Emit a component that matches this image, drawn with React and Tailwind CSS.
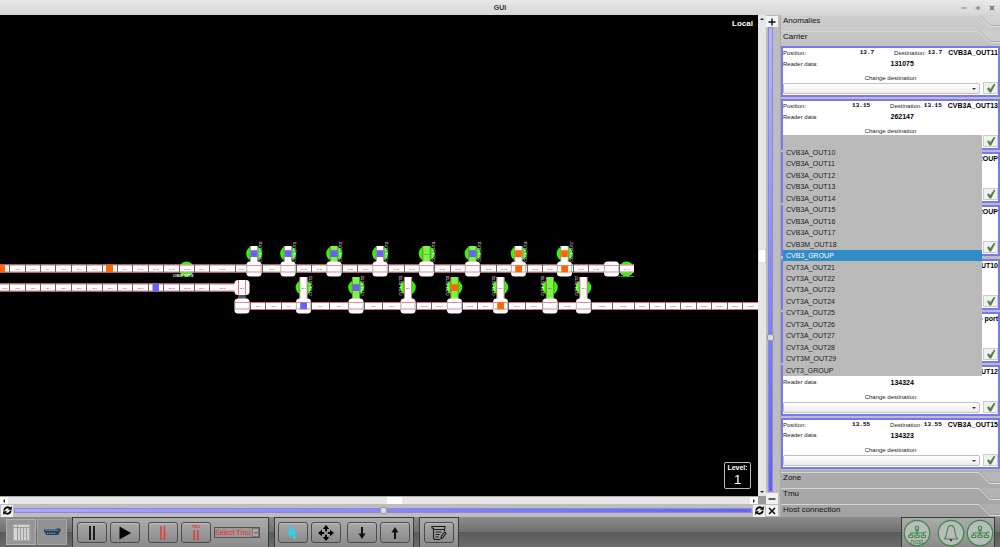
import React, { useState } from 'react';

const TOP_DIVIDERS = [9, 25, 40, 55, 71, 86, 102, 117, 132, 148, 163, 179, 194, 209, 235, 247, 262, 281, 296, 311, 327, 342, 357, 373, 388, 404, 419, 434, 450, 465, 480, 496, 511, 527, 542, 557, 573, 588, 604, 619];
const MIDDLE_DIVIDERS = [9, 25, 40, 55, 71, 86, 102, 117, 132, 148, 163, 179, 194, 209];
const BOTTOM_DIVIDERS = [250, 265, 281, 296, 311, 329, 348, 364, 382, 401, 416, 431, 447, 462, 477, 493, 508, 525, 542, 558, 576, 591, 612, 634, 649, 665, 680, 696, 711, 727, 742];

const BLUE = '#6363fb';
const ORANGE = '#ff6500';
const GREEN = '#33f50a';
const LIME = '#74f947';

const TOP_UNITS = [
  { x: 254, stem: '#fff', load: BLUE, label: 'CVB3A_OUT10' },
  { x: 288, stem: '#fff', load: BLUE, label: 'CVB3A_OUT11' },
  { x: 334, stem: LIME, load: BLUE, label: 'CVB3A_OUT12' },
  { x: 380, stem: '#fff', load: BLUE, label: 'CVB3A_OUT13' },
  { x: 426.5, stem: LIME, label: 'CVB3A_OUT14' },
  { x: 472.5, stem: LIME, load: BLUE, label: 'CVB3A_OUT15' },
  { x: 518.5, stem: '#fff', load: ORANGE, base: ORANGE, label: 'CVB3A_OUT16' },
  { x: 564.5, stem: '#fff', load: ORANGE, base: ORANGE, label: 'CVB3A_OUT17' },
];

const BOTTOM_UNITS = [
  { x: 303.5, stem: '#fff', base: BLUE, side: 8, label: 'CVT3A_OUT21' },
  { x: 356, stem: LIME, load: BLUE, side: 8, label: 'CVT3A_OUT22' },
  { x: 408, stem: '#fff', side: -6, label: 'CVT3A_OUT23' },
  { x: 454.5, stem: LIME, load: ORANGE, side: -6, label: 'CVT3A_OUT24' },
  { x: 500.5, stem: '#fff', base: ORANGE, side: -6, label: 'CVT3A_OUT25' },
  { x: 550, stem: LIME, side: -6, label: 'CVT3A_OUT26' },
  { x: 583.5, stem: '#fff', side: -6, label: 'CVT3A_OUT27' },
];

const DESTINATIONS = [
  'CVB3A_OUT10', 'CVB3A_OUT11', 'CVB3A_OUT12', 'CVB3A_OUT13', 'CVB3A_OUT14', 'CVB3A_OUT15', 'CVB3A_OUT16',
  'CVB3A_OUT17', 'CVB3M_OUT18', 'CVB3_GROUP', 'CVT3A_OUT21', 'CVT3A_OUT22', 'CVT3A_OUT23', 'CVT3A_OUT24',
  'CVT3A_OUT25', 'CVT3A_OUT26', 'CVT3A_OUT27', 'CVT3A_OUT28', 'CVT3M_OUT29', 'CVT3_GROUP',
];

// compact cards lie behind the open list and only carry their name
const CARRIERS = [
  { position: '13.7', name: 'CVB3A_OUT11', reader: '131075' },
  { position: '13.15', name: 'CVB3A_OUT13', reader: '262147', open: true },
  { name: 'CVB3_GROUP', compact: true },
  { name: 'CVB3_GROUP', compact: true },
  { name: 'CVB3A_OUT10', compact: true },
  { name: 'No port', compact: true },
  { name: 'CVB3A_OUT12', reader: '134324' },
  { position: '13.55', name: 'CVB3A_OUT15', reader: '134323' },
];

function Track({ from, to, y, dividers, prefix }) {
  const stops = [from, ...dividers, to];
  return (
    <g>
      <rect x={from} y={y} width={to - from} height="8" fill="#fff" />
      <path d={`M${from} ${y + 0.5}H${to}M${from} ${y + 7.5}H${to}`} stroke="#cf4a58" strokeWidth="0.8" />
      {dividers.map((x) => (
        <path key={x} d={`M${x + 0.5} ${y}v8`} stroke="#555" strokeWidth="0.9" />
      ))}
      {stops.slice(0, -1).map((x, i) => (
        <text key={x} x={(x + stops[i + 1]) / 2 + 0.5} y={y + 5} fontSize="2.4" textAnchor="middle" fill="#444">
          {prefix}.{i + 1}
        </text>
      ))}
    </g>
  );
}

function Block({ x, y }) {
  return (
    <g>
      <rect x={x - 7.5} y={y} width="15" height="15" rx="3.5" fill="#fff" />
      <path d={`M${x - 7} ${y + 4}h14M${x - 7} ${y + 10.5}h14`} stroke="#d9566a" strokeWidth="0.7" />
      <path d={`M${x - 7.2} ${y + 3}v8M${x + 7.2} ${y + 3}v8`} stroke="#777" strokeWidth="0.6" />
    </g>
  );
}

function Unit({ x, stem, load, base, label, side = 8, top, height, center, block }) {
  return (
    <g>
      <circle cx={x} cy={center} r="7.8" fill={GREEN} />
      <text transform={`translate(${x + side} ${center + 8}) rotate(-90)`} fontSize="2.8" fill="#fff">{label}</text>
      <rect x={x - 4} y={top} width="8" height={height} fill={stem} />
      <path d={`M${x - 3.7} ${top}v${height}M${x + 3.7} ${top}v${height}`} stroke="#a8483c" strokeWidth="0.8" />
      {load ? (
        <rect x={x - 3.3} y={center - 3.3} width="6.6" height="6.8" fill={load} />
      ) : (
        <text x={x} y={center + 1} fontSize="2.4" textAnchor="middle" fill="#333">13.7</text>
      )}
      <Block x={x} y={block} />
      {base && <rect x={x - 3.3} y={block + 4} width="6.8" height="6.8" fill={base} />}
    </g>
  );
}

function PlantMap() {
  return (
    <svg viewBox="0 15 758 481" preserveAspectRatio="xMinYMin meet" className="block h-full w-full">
      <circle cx="186.5" cy="269" r="7.5" fill={GREEN} />
      <circle cx="626.5" cy="269" r="7.5" fill={GREEN} />
      <Track from={0} to={634} y={264.5} dividers={TOP_DIVIDERS} prefix="11" />
      <rect x="0" y="265" width="5" height="7" fill={ORANGE} />
      <rect x="106" y="265" width="7" height="7" fill={ORANGE} />
      <Track from={0} to={235} y={283.5} dividers={MIDDLE_DIVIDERS} prefix="12" />
      <rect x="152.5" y="284" width="6.5" height="7" fill={BLUE} />
      <Track from={235} to={758} y={302} dividers={BOTTOM_DIVIDERS} prefix="13" />
      <text x="173" y="276.5" fontSize="2.8" fontWeight="bold" fill="#fff">CVB3M_OUT18</text>
      <text x="618" y="277" fontSize="2.2" fill="#fff">CVT3M_OUT28</text>

      <rect x="238" y="294" width="8" height="6" fill="#555" />
      <rect x="234.5" y="280" width="15" height="15" rx="3.5" fill="#fff" />
      <path d="M238.5 280v15M245.5 280v15" stroke="#d9566a" strokeWidth="0.8" />
      <text x="242" y="288.5" fontSize="2.4" textAnchor="middle" fill="#333">12.1</text>
      <Block x={242} y={298.5} />
      <Block x={611.5} y={261.5} />

      {TOP_UNITS.map((unit) => (
        <Unit key={unit.label} {...unit} top={246} height={16} center={253.5} block={261.5} />
      ))}
      {BOTTOM_UNITS.map((unit) => (
        <Unit key={unit.label} {...unit} top={277} height={22} center={287.5} block={298.5} />
      ))}
    </svg>
  );
}

function TabHeader({ title }) {
  return (
    <button className="flex h-4 w-full shrink-0 items-start text-left">
      <span className="flex h-full flex-1 items-start border-t border-[#d4d4d4] pl-0.5 text-[8px] leading-[9px] text-[#111]">{title}</span>
      <svg viewBox="0 0 21 16" className="h-4 w-[21px]" fill="none">
        <path d="M0 .5 11 11.5H21V0H0z" fill="#fff" fillOpacity="0.12" />
        <path d="M0 .5 11 11.5H21" stroke="#dedede" />
        <path d="M0 -.8 11.4 10.5H21" stroke="#888" strokeWidth="0.5" />
      </svg>
    </button>
  );
}

function CarrierCard({ carrier, index, selected, onSelect }) {
  return (
    <div className="relative flex h-[51px] shrink-0 flex-col border-2 border-[#7878f4] bg-white text-[6px] text-[#222]">
      <div className="flex h-[10px] items-center leading-[10px]">
        {carrier.position && (
          <>
            <span className="flex-1">Position:</span>
            <span className="font-['Liberation_Mono',monospace] text-[6px] font-bold text-black">{carrier.position}</span>
            <span className="ml-5">Destination:</span>
            <span className="ml-0.5 font-['Liberation_Mono',monospace] text-[6px] font-bold text-black">{carrier.position}</span>
          </>
        )}
        <span className="ml-auto pl-1.5 text-[7px] font-bold text-black">{carrier.name}</span>
      </div>
      <div className="grid h-3 grid-cols-2 items-center">
        {carrier.reader && (
          <>
            <span>Reader data:</span>
            <span className="text-[7px] font-bold text-black">{carrier.reader}</span>
          </>
        )}
      </div>
      <label htmlFor={`destination-${index}`} className="flex h-[13px] items-end justify-center leading-[10px]">
        {!carrier.compact && 'Change destination'}
      </label>
      <div className="flex h-[11px] gap-[3px]">
        <div className="relative flex-1">
          <select
            id={`destination-${index}`}
            aria-label="Change destination"
            defaultValue=""
            className="block h-full w-full appearance-none rounded-[2px] border border-[#c0c0c0] bg-linear-to-b from-white to-[#ececec] text-[7px]"
          >
            <option value=""></option>
            {DESTINATIONS.map((name) => <option key={name}>{name}</option>)}
          </select>
          <svg viewBox="0 0 4 2" className="pointer-events-none absolute top-[5px] right-1 h-0.5 w-1"><path d="M0 0h4L2 2z" fill="#333" /></svg>
        </div>
        <button aria-label="Apply destination" className="-mt-px flex h-3 w-[15px] items-center justify-center border border-[#ccc] bg-[#f1f1f1]">
          <svg viewBox="0 0 12 12" className="h-[10px] w-[10px]"><path d="M1.200 6.500 3.500 5 5 7.500 9.500.8 11.200 1.800 6.200 11.500H4.200z" fill="#587f4b" /></svg>
        </button>
      </div>
      {carrier.open && (
        <ul role="listbox" aria-label="Destinations" className="absolute top-[34px] right-4 left-0 z-10 flex h-[241px] flex-col bg-[#bababa] text-[7px] text-[#222]">
          <li className="flex-1"></li>
          {DESTINATIONS.map((name) => (
            <li
              key={name}
              role="option"
              aria-selected={name === selected}
              onClick={() => onSelect(name)}
              className={`flex flex-1 items-center pl-[3px] leading-[11px] ${name === selected ? 'bg-[#308cc6] text-white' : ''}`}
            >
              {name}
            </li>
          ))}
        </ul>
      )}
    </div>
  );
}

function ToolButton({ label, children }) {
  return (
    <button aria-label={label} className="flex h-[21px] w-[30px] items-center justify-center rounded-[3px] border border-[#4c4c4c] bg-linear-to-b from-[#a9a9a9] to-[#8b8b8b] shadow-[inset_0_1px_0_#bdbdbd]">
      {children}
    </button>
  );
}

function ToolGroup({ children, className = '' }) {
  return (
    <div className={`flex h-full items-center border border-b-0 border-[#3b3b3b] bg-linear-to-b from-[#ababab] to-[#8c8c8c] ${className}`}>
      {children}
    </div>
  );
}

function RefreshIcon() {
  return (
    <svg viewBox="0 0 12 12" className="h-[11px] w-[11px]" fill="none" stroke="#000" strokeWidth="2">
      <path d="M2.5 6a3.6 3.6 0 0 1 6-2.6M9.5 6a3.6 3.6 0 0 1-6 2.6" />
      <path d="M10.7 1v4.2H6.5zM1.3 11V6.8h4.2z" fill="#000" stroke="none" />
    </svg>
  );
}

function HostTree({ label }) {
  return (
    <svg viewBox="0 0 28 28" className="h-7 w-7" fill="none" stroke="#3a8a48" strokeWidth="1.1">
      <circle cx="14" cy="14" r="12.7" fill="#b9bdb9" strokeWidth="1.2" />
      <circle cx="14" cy="9" r="1.7" />
      <path d="M12 11.700h4M14 11v5M7.5 16v-2h13v2M20.5 13.2h3" />
      <rect x="5.5" y="16" width="4.5" height="2.5" rx="1" />
      <rect x="11.8" y="16" width="4.5" height="2.5" rx="1" />
      <rect x="18.2" y="16" width="4.5" height="2.5" rx="1" />
      {label && <text x="14" y="24.5" fontSize="6.5" textAnchor="middle" fill="#2f7d3c" stroke="none">{label}</text>}
    </svg>
  );
}

export default function App() {
  const [selected, setSelected] = useState('CVB3_GROUP');

  return (
    <div className="flex h-screen min-h-[540px] flex-col overflow-hidden bg-[#bdbdbd] font-['Liberation_Sans',Arial,sans-serif] text-[#222]">
      {/* Title bar */}
      <header className="grid h-[15px] shrink-0 grid-cols-3 items-center bg-linear-to-b from-[#e9e9e9] to-[#d6d6d6]">
        <h1 className="col-start-2 text-center text-[7px] font-bold leading-[15px] text-[#333]">GUI</h1>
        <div className="flex justify-end gap-2 pr-[5px]">
          <button aria-label="Minimize"><svg viewBox="0 0 6 6" className="h-1.5 w-1.5"><path d="M.5 3h5" stroke="#777" /></svg></button>
          <button aria-label="Maximize"><svg viewBox="0 0 6 6" className="h-1.5 w-1.5"><path d="M.5 3h5M3 .5v5" stroke="#777" /></svg></button>
          <button aria-label="Close"><svg viewBox="0 0 6 6" className="h-1.5 w-1.5"><path d="m1 1 4 4M5 1 1 5" stroke="#666" strokeWidth="1.2" /></svg></button>
        </div>
      </header>

      <div className="flex min-h-0 flex-1">
        {/* Plant view */}
        <main className="flex min-w-0 flex-1 flex-col">
          <div className="flex min-h-0 flex-1">
            <div className="relative min-w-0 flex-1 bg-black">
              <PlantMap />
              <div className="absolute top-1 right-[5px] text-[8px] font-bold leading-[9px] text-white">Local</div>
              <div className="absolute right-[7px] bottom-[7px] flex h-[27px] w-[27px] flex-col items-center rounded-[2px] border border-[#bbb] text-white">
                <span className="text-[7px] font-bold leading-[10px]">Level:</span>
                <span className="text-[13px] leading-[14px]">1</span>
              </div>
            </div>
            <div className="flex w-2 flex-col justify-between bg-[#e6e6e6]">
              <button aria-label="Scroll up" className="flex h-2 justify-center pt-[3px]"><svg viewBox="0 0 4 2" className="h-0.5 w-1"><path d="M0 2h4L2 0z" fill="#222" /></svg></button>
              <div className="h-[14px] border border-[#ddd] bg-white"></div>
              <button aria-label="Scroll down" className="flex h-2 justify-center pt-[3px]"><svg viewBox="0 0 4 2" className="h-0.5 w-1"><path d="M0 0h4L2 2z" fill="#222" /></svg></button>
            </div>
          </div>
          <div className="flex h-2 shrink-0">
            <div className="flex flex-1 items-center border-t border-[#aaa] bg-[#e6e6e6]">
              <button aria-label="Scroll left" className="flex h-full w-2 items-center justify-center bg-white"><svg viewBox="0 0 2 4" className="h-1 w-0.5"><path d="M2 0v4L0 2z" fill="#222" /></svg></button>
              <div className="w-1/2"></div>
              <div className="h-full w-[15px] shrink-0 bg-white"></div>
              <button aria-label="Scroll right" className="ml-auto flex h-full w-2 items-center justify-center bg-white"><svg viewBox="0 0 2 4" className="h-1 w-0.5"><path d="M0 0v4l2-2z" fill="#222" /></svg></button>
            </div>
            <div className="w-2 bg-[#999]"></div>
          </div>
          <div className="flex h-[13px] shrink-0 items-center gap-px pr-px pl-px">
            <button aria-label="Reset rotation" className="flex h-3 w-3 items-center justify-center bg-[#f1f1f1]"><RefreshIcon /></button>
            <input
              type="range"
              aria-label="Rotation"
              defaultValue="50"
              className="h-[7px] min-w-0 flex-1 appearance-none bg-transparent [&::-webkit-slider-runnable-track]:h-[5px] [&::-webkit-slider-runnable-track]:border [&::-webkit-slider-runnable-track]:border-[#8a8ad8] [&::-webkit-slider-runnable-track]:bg-linear-to-r [&::-webkit-slider-runnable-track]:from-[#a9a9ff] [&::-webkit-slider-runnable-track]:to-[#6565f5] [&::-webkit-slider-thumb]:-mt-0.5 [&::-webkit-slider-thumb]:h-[7px] [&::-webkit-slider-thumb]:w-[7px] [&::-webkit-slider-thumb]:appearance-none [&::-webkit-slider-thumb]:rounded-[2px] [&::-webkit-slider-thumb]:border [&::-webkit-slider-thumb]:border-[#999] [&::-webkit-slider-thumb]:bg-[#ddd]"
            />
            <button aria-label="Refresh view" className="flex h-3 w-3 items-center justify-center bg-[#f1f1f1]"><RefreshIcon /></button>
          </div>
        </main>

        {/* Zoom slider */}
        <div className="flex w-[14px] shrink-0 flex-col pt-px pb-px">
          <button aria-label="Zoom in" className="flex h-[11px] w-3 shrink-0 items-center justify-center bg-[#f4f4f4]"><svg viewBox="0 0 8 8" className="h-2 w-2"><path d="M.5 4h7M4 .5v7" stroke="#111" strokeWidth="1.4" /></svg></button>
          <input
            type="range"
            aria-label="Zoom"
            defaultValue="67"
            className="ml-px min-h-0 w-[7px] flex-1 appearance-none bg-transparent [writing-mode:vertical-lr] [&::-webkit-slider-runnable-track]:w-[5px] [&::-webkit-slider-runnable-track]:border [&::-webkit-slider-runnable-track]:border-[#8a8ad8] [&::-webkit-slider-runnable-track]:bg-linear-to-b [&::-webkit-slider-runnable-track]:from-[#b5b5ff] [&::-webkit-slider-runnable-track]:to-[#6060f5] [&::-webkit-slider-thumb]:-ml-0.5 [&::-webkit-slider-thumb]:h-[7px] [&::-webkit-slider-thumb]:w-[7px] [&::-webkit-slider-thumb]:appearance-none [&::-webkit-slider-thumb]:rounded-[2px] [&::-webkit-slider-thumb]:border [&::-webkit-slider-thumb]:border-[#999] [&::-webkit-slider-thumb]:bg-[#ddd]"
          />
          <button aria-label="Zoom out" className="mt-px flex h-[11px] w-3 shrink-0 items-center justify-center bg-[#f1f1f1]"><svg viewBox="0 0 8 8" className="h-2 w-2"><path d="M.5 4h7" stroke="#111" strokeWidth="1.3" /></svg></button>
          <button aria-label="Reset zoom" className="mt-px flex h-[11px] w-3 shrink-0 items-center justify-center bg-[#f1f1f1]"><svg viewBox="0 0 8 8" className="h-2 w-2"><path d="m1 1 6 6M7 1 1 7" stroke="#111" strokeWidth="1.5" /></svg></button>
        </div>

        {/* Side panel */}
        <aside className="flex w-[220px] shrink-0 flex-col border-l border-[#aaa]">
          <div className="bg-linear-to-b from-[#cecece] to-[#c2c2c2]">
            <TabHeader title="Anomalies" />
            <TabHeader title="Carrier" />
          </div>
          <div className="-mt-px flex min-h-0 flex-1 flex-col justify-between pb-px">
            {CARRIERS.map((carrier, i) => (
              <CarrierCard key={i} carrier={carrier} index={i} selected={selected} onSelect={setSelected} />
            ))}
          </div>
          <div className="h-[47px] shrink-0 overflow-hidden bg-linear-to-b from-[#aeaeae] to-[#a2a2a2] pt-0.5">
            <TabHeader title="Zone" />
            <TabHeader title="Tmu" />
            <TabHeader title="Host connection" />
          </div>
        </aside>
      </div>

      {/* Toolbar */}
      <footer className="flex h-[30px] shrink-0 items-center bg-[linear-gradient(#8b8b8b,#6f6f6f_50%,#5b5b5b_51%,#6b6b6b)] pr-[5px] pl-1.5">
        <div className="mr-[5px] flex h-[26px] gap-px">
          <button aria-label="List view" className="flex w-[30px] items-center justify-center border border-[#b0b0b0] bg-[#969696]">
            <svg viewBox="0 0 17 17" className="h-[17px] w-[17px]">
              <path d="M.5.5h16v16H.5z" fill="#d5d5d5" stroke="#aaa" />
              <path d="M1 3.5h15M4.5 1v15M7.5 3v13M10.5 3v13M13.5 3v13" stroke="#8b8b8b" strokeWidth="0.8" />
              <path d="M5 6h11M5 9h11M5 12h11" stroke="#b9b9b9" strokeWidth="0.6" />
            </svg>
          </button>
          <button aria-label="Carrier view" className="flex w-[30px] items-center justify-center border border-[#a4a4a4] bg-[#929292]">
            <svg viewBox="0 0 17 8" className="h-2 w-[17px]">
              <path d="M0 1.500h11l2-1H16.500V3L15 5.500 14 7H2L1 4H0z" fill="#24415c" />
              <path d="M1 2.300h14" stroke="#8eacc8" strokeWidth="0.6" />
              <path d="M3 5.300h9" stroke="#a9bccc" strokeDasharray="1.2 1" />
            </svg>
          </button>
        </div>

        <ToolGroup className="mr-[5px] w-[197px] pl-1">
          <ToolButton label="Pause"><svg viewBox="0 0 8 14" className="h-[14px] w-2"><path d="M2 0v14M6 0v14" stroke="#111" strokeWidth="1.8" /></svg></ToolButton>
          <div className="w-[3px]"></div>
          <ToolButton label="Play"><svg viewBox="0 0 12 14" className="h-[14px] w-3"><path d="M.5.5 12 7 .5 13.500z" fill="#000" /></svg></ToolButton>
          <div className="w-2"></div>
          <ToolButton label="Pause all"><svg viewBox="0 0 8 14" className="h-[14px] w-2"><path d="M2 0v14M5.500 0v14" stroke="#e23b3b" strokeWidth="1.6" /></svg></ToolButton>
          <div className="w-[3px]"></div>
          <ToolButton label="Pause Tmu">
            <svg viewBox="0 0 12 18" className="h-[18px] w-3">
              <text x="6" y="4" fontSize="4" fontWeight="bold" textAnchor="middle" fill="#e23b3b">TMU</text>
              <path d="M4.200 6v10.500M7.800 6v10.500" stroke="#e23b3b" strokeWidth="1.6" />
            </svg>
          </ToolButton>
          <div className="relative ml-[3px]">
            <select aria-label="Select Tmu" className="block h-[11px] w-[46px] appearance-none border border-[#555] bg-[#999] text-[7px] leading-[9px] text-[#f22]">
              <option>Select Tmu</option>
            </select>
            <span className="pointer-events-none absolute top-px right-px flex h-[9px] w-[7px] items-center justify-center border border-[#777] bg-[#aaa]">
              <svg viewBox="0 0 4 2" className="h-0.5 w-1"><path d="M0 0h4L2 2z" fill="#e22" /></svg>
            </span>
          </div>
        </ToolGroup>

        <ToolGroup className="mr-[5px] w-[140px] pl-[3px]">
          <ToolButton label="Select"><svg viewBox="0 0 10 15" className="h-[15px] w-[10px]"><path d="M1 0v12l2.800-2.600L6 14.500l2-.9-2.200-4.800H9.500z" fill="#2fd0f8" /></svg></ToolButton>
          <div className="w-[3px]"></div>
          <ToolButton label="Move">
            <svg viewBox="0 0 16 16" className="h-4 w-4">
              <path d="M8 0l3.200 4H4.800zM8 16l3.200-4H4.800zM0 8l4-3.200v6.400zM16 8l-4-3.200v6.400z" fill="#000" />
              <path d="M8 3v3.200M8 9.800V13M3 8h3.200M9.800 8H13" stroke="#000" strokeWidth="2" />
            </svg>
          </ToolButton>
          <div className="w-1.5"></div>
          <ToolButton label="Level down"><svg viewBox="0 0 8 12" className="h-3 w-2"><path d="M4 0v8" stroke="#111" strokeWidth="2" /><path d="M.5 6.500h7L4 12z" fill="#111" /></svg></ToolButton>
          <div className="w-[3px]"></div>
          <ToolButton label="Level up"><svg viewBox="0 0 8 12" className="h-3 w-2"><path d="M4 4v8" stroke="#111" strokeWidth="2" /><path d="M.5 5.500h7L4 0z" fill="#111" /></svg></ToolButton>
        </ToolGroup>

        <ToolGroup className="w-10 justify-center">
          <ToolButton label="Edit log">
            <svg viewBox="0 0 16 16" className="h-4 w-4" fill="none" stroke="#1c1c1c" strokeWidth="1.1">
              <path d="M9 14.500H3.500L2.500 13V3.500L1 3V1.500h13L13.500 6M2.500 4.500h11M4.500 7h6M4.500 9.500h4M4.500 12h3" />
              <path d="M10 13.500 10.500 11l3-4 1.500 1.300-3 4.200z" />
            </svg>
          </ToolButton>
        </ToolGroup>

        <ToolGroup className="ml-auto w-[94px] gap-px pl-px">
          <button aria-label="Host status"><HostTree label="host" /></button>
          <button aria-label="Alarms" className="ml-[5px]">
            <svg viewBox="0 0 28 28" className="h-7 w-7" fill="none" stroke="#3a8a48" strokeWidth="1.1">
              <circle cx="14" cy="14" r="12.7" fill="#b9bdb9" strokeWidth="1.2" />
              <path d="M7.500 20c2.500-3 2-5 2.700-8.500C10.800 8 12 6.500 14 6.500s3.200 1.500 3.800 5c.7 3.500.2 5.500 2.700 8.500z" />
              <path d="M12.500 20.500h3L14 22.500z" fill="#111" stroke="none" />
            </svg>
          </button>
          <button aria-label="Network status"><HostTree /></button>
        </ToolGroup>
      </footer>
    </div>
  );
}
